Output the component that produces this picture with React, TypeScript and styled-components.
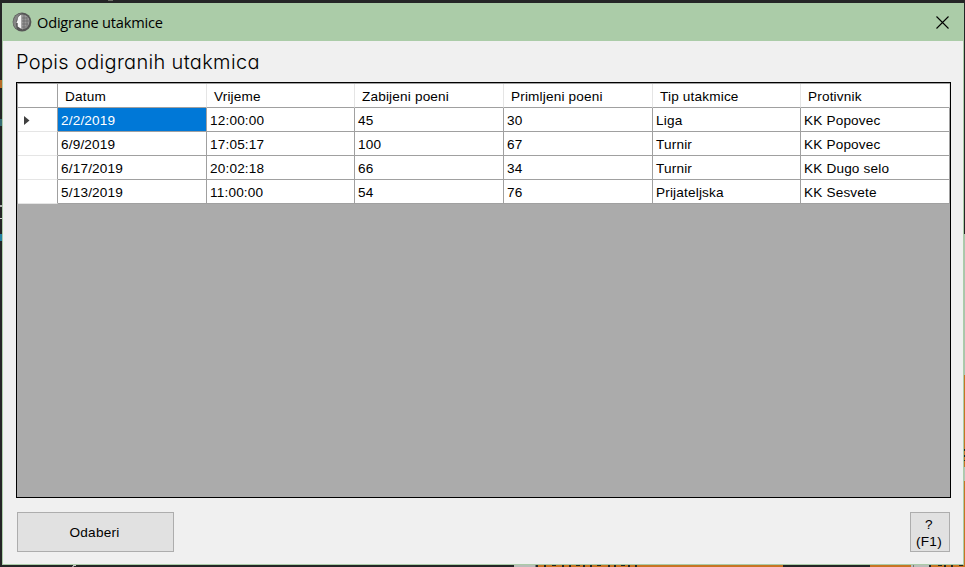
import React from "react";
import styled, { createGlobalStyle } from "styled-components";

const Global = createGlobalStyle`
  *{box-sizing:border-box}
  html,body{margin:0;padding:0;overflow:hidden;background:#1f2020}
`;

const Desktop = styled.div`
  position: relative;
  width: 965px;
  height: 567px;
  padding: 3px 1px 2px 2px;
  overflow: hidden;
  background: #242526;
  color: #000;
  font-family: "Liberation Sans", Arial, sans-serif;
  font-size: 13.6px;
`;
const Speck = styled.i<{ $x: number; $y: number; $w: number; $h: number; $c: string }>`
  position: absolute;
  left: ${(p) => p.$x}px;
  top: ${(p) => p.$y}px;
  width: ${(p) => p.$w}px;
  height: ${(p) => p.$h}px;
  background: ${(p) => p.$c};
`;
const Window = styled.section`
  display: flex;
  flex-direction: column;
  width: 962px;
  height: 562px;
  border: 1px solid #abcca8;
  border-top: 0;
  background: #f0f0f0;
`;
const TitleBar = styled.header`
  display: flex;
  align-items: center;
  height: 38px;
  flex: none;
  padding: 0 14px 0 9px;
  background: #abcca8;
`;
const TitleText = styled.span`
  flex: 1;
  margin-left: 5px;
  font: 14.6px/20px "Open Sans", "Noto Sans", sans-serif;
  letter-spacing: -0.2px;
`;
const Body = styled.main`
  display: flex;
  flex-direction: column;
  flex: 1;
  padding: 0 12px 12px 13px;
`;
const Heading = styled.h1`
  margin: 0;
  height: 41px;
  font: 300 20px/42px Inter, Lato, sans-serif;
  font-feature-settings: "cv11";
  letter-spacing: 0.33px;
  white-space: nowrap;
`;
const Grid = styled.div`
  width: 935px;
  height: 416px;
  border: 1px solid #000;
  background: #ababab;
  letter-spacing: 0.17px;
`;
const Row = styled.div<{ $head?: boolean }>`
  display: grid;
  grid-template-columns: 40px 149px 148px 149px 149px 148px 149px;
  grid-template-rows: 24px;
  height: ${(p) => (p.$head ? 25 : 24)}px;
  border-top: ${(p) => (p.$head ? "1px solid #a0a0a0" : "0")};
  border-left: 1px solid #a0a0a0;
  width: 933px;
`;
const HeadCell = styled.div`
  padding-left: 7px;
  line-height: 25px;
  height: 24px;
  background: #fff;
  border-right: 1px solid #e5e5e5;
  border-bottom: 1px solid #a0a0a0;
  white-space: nowrap;
`;
const Marker = styled.div<{ $head?: boolean }>`
  display: flex;
  align-items: center;
  padding: 1px 0 0 6px;
  background: #fff;
  border-right: 1px solid #a0a0a0;
  border-bottom: 1px solid ${(p) => (p.$head ? "#a0a0a0" : "#e5e5e5")};
`;
const Cell = styled.div<{ $selected?: boolean }>`
  padding-left: 3px;
  line-height: 25px;
  height: 24px;
  white-space: nowrap;
  color: ${(p) => (p.$selected ? "#fff" : "#000")};
  background: ${(p) => (p.$selected ? "#0078d7" : "#fff")};
  border-right: 1px solid #a0a0a0;
  border-bottom: 1px solid #a0a0a0;
`;
const Footer = styled.footer`
  display: flex;
  justify-content: space-between;
  margin-top: 14px;
  padding: 0 1px;
`;
const Button = styled.button<{ $w: number }>`
  width: ${(p) => p.$w}px;
  height: 40px;
  padding: 1px 2px 0 0;
  border: 1px solid #adadad;
  background: #e1e1e1;
  color: #000;
  font: 13.6px/17px "Liberation Sans", Arial, sans-serif;
  letter-spacing: 0.25px;
  white-space: pre-line;
`;

const columns = ["Datum", "Vrijeme", "Zabijeni poeni", "Primljeni poeni", "Tip utakmice", "Protivnik"];
const rows = [
  ["2/2/2019", "12:00:00", "45", "30", "Liga", "KK Popovec"],
  ["6/9/2019", "17:05:17", "100", "67", "Turnir", "KK Popovec"],
  ["6/17/2019", "20:02:18", "66", "34", "Turnir", "KK Dugo selo"],
  ["5/13/2019", "11:00:00", "54", "76", "Prijateljska", "KK Sesvete"],
];
const specks: [number, number, number, number, string][] = [
  [108, 0, 5, 1, "#6b6d65"],
  [0, 80, 2, 8, "#b66a26"],
  [0, 119, 2, 7, "#356d73"],
  [0, 205, 2, 2, "#b0b0b0"],
  [0, 218, 2, 1, "#d0d0d0"],
  [0, 234, 2, 7, "#2482a4"],
  [964, 234, 1, 141, "#abc3af"],
  [964, 375, 1, 92, "#c87423"],
  [964, 449, 1, 2, "#26261c"],
  [964, 455, 1, 2, "#26261c"],
  [964, 460, 1, 1, "#26261c"],
  [964, 467, 1, 14, "#b4c4b6"],
  [964, 481, 1, 86, "#c87423"],
  [73, 565, 3, 1, "#c8c8c8"],
  [72, 566, 2, 1, "#909090"],
  [514, 565, 22, 2, "#b9bdb9"],
  [535, 565, 1, 2, "#777"],
  [538, 565, 245, 2, "#c87423"],
  [870, 565, 41, 2, "#c87423"],
  [911, 565, 18, 2, "#b9bdb9"],
  [913, 565, 1, 2, "#777"],
  [931, 565, 34, 2, "#c87423"],
  ...[544, 552, 562, 569, 576, 583, 590, 597, 608, 614, 621, 628, 635, 938, 944, 951, 959].map(
    (x, i): [number, number, number, number, string] => [x, 565, i % 3 === 1 ? 4 : 2, i % 3 === 1 ? 1 : 2, "#26261c"]
  ),
];

const Emblem = () => (
  <svg width="20" height="20" viewBox="0 0 20 20">
    <circle cx="10" cy="10" r="9.4" fill="#555" />
    <path d="M10 1.5A8.5 8.5 0 0 0 5 17Q2.5 10 7 3Z" fill="#858585" />
    <path d="M9.5 2.5Q5.5 4 5.6 8L4.4 11H5.7V14.5L9.5 17Z" fill="#f5f5f5" />
    <path d="M10 2.5Q17 3 17.5 9Q17.5 16 10 17.5Z" fill="#999" />
    <path d="M10 6h5M10 9h7M10 12h6M10 15h4M12 3v14M15 5v10" stroke="#666" strokeWidth=".7" fill="none" />
  </svg>
);

export default function App() {
  return (
    <Desktop>
      <Global />
      {specks.map(([x, y, w, h, c], i) => (
        <Speck key={i} $x={x} $y={y} $w={w} $h={h} $c={c} />
      ))}
      <Window>
        <TitleBar>
          <Emblem />
          <TitleText>Odigrane utakmice</TitleText>
          <svg width="13" height="13" viewBox="0 0 13 13">
            <path d="M.5.5l12 12M12.5.5l-12 12" stroke="#000" strokeWidth="1.1" />
          </svg>
        </TitleBar>
        <Body>
          <Heading>Popis odigranih utakmica</Heading>
          <Grid>
            <Row $head>
              <Marker $head />
              {columns.map((c) => (
                <HeadCell key={c}>{c}</HeadCell>
              ))}
            </Row>
            {rows.map((r, i) => (
              <Row key={i}>
                <Marker>
                  {i === 0 && (
                    <svg width="6" height="9" viewBox="0 0 6 9">
                      <path d="M0 0L5.5 4.5L0 9Z" fill="#404040" />
                    </svg>
                  )}
                </Marker>
                {r.map((v, j) => (
                  <Cell key={j} $selected={i === 0 && j === 0}>
                    {v}
                  </Cell>
                ))}
              </Row>
            ))}
          </Grid>
          <Footer>
            <Button $w={157}>Odaberi</Button>
            <Button $w={40}>{"?\n(F1)"}</Button>
          </Footer>
        </Body>
      </Window>
    </Desktop>
  );
}
